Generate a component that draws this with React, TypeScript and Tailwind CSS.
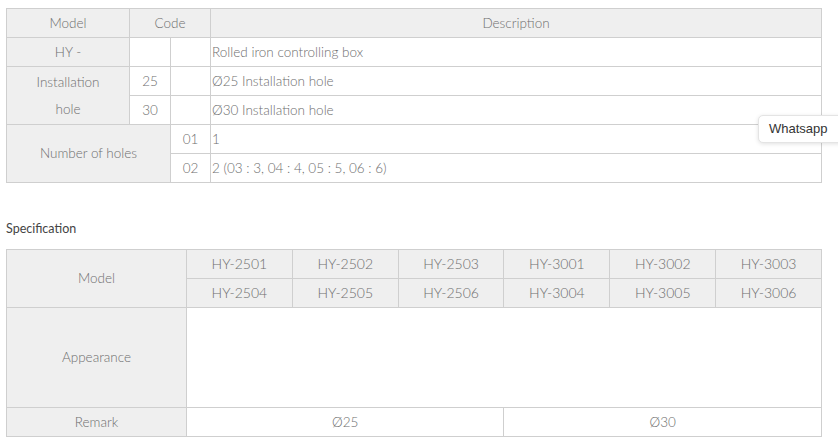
const cell = "border border-[#cfcfcf] text-center align-middle p-0";
const grey = "bg-[#efefef]";

const models = [
  ["HY-2501", "HY-2502", "HY-2503", "HY-3001", "HY-3002", "HY-3003"],
  ["HY-2504", "HY-2505", "HY-2506", "HY-3004", "HY-3005", "HY-3006"],
];

export default function App() {
  return (
    <div className="relative w-[838px] h-[444px] bg-white overflow-hidden font-['Lato',sans-serif] font-light text-[13.5px] text-[#6e6e6e]">
      <div className="pl-[6px] pt-[8px] w-[822px]">
        {/* Code table */}
        <table className="w-[816px] border-collapse table-fixed">
          <colgroup>
            <col className="w-[123px]" />
            <col className="w-[41px]" />
            <col className="w-[40px]" />
            <col />
          </colgroup>
          <tbody>
            <tr className="h-[29px]">
              <td className={`${cell} ${grey}`}>Model</td>
              <td className={`${cell} ${grey}`} colSpan={2}>Code</td>
              <td className={`${cell} ${grey}`}>Description</td>
            </tr>
            <tr className="h-[29px]">
              <td className={`${cell} ${grey}`}>HY -</td>
              <td className={cell}></td>
              <td className={cell}></td>
              <td className={`${cell} text-left pl-[1px]`}>Rolled iron controlling box</td>
            </tr>
            <tr className="h-[29px]">
              <td className={`${cell} ${grey} leading-[27px]`} rowSpan={2}>
                Installation
                <br />
                hole
              </td>
              <td className={cell}>25</td>
              <td className={cell}></td>
              <td className={`${cell} text-left pl-[1px]`}>Ø25 Installation hole</td>
            </tr>
            <tr className="h-[29px]">
              <td className={cell}>30</td>
              <td className={cell}></td>
              <td className={`${cell} text-left pl-[1px]`}>Ø30 Installation hole</td>
            </tr>
            <tr className="h-[29px]">
              <td className={`${cell} ${grey}`} rowSpan={2} colSpan={2}>Number of holes</td>
              <td className={cell}>01</td>
              <td className={`${cell} text-left pl-[1px]`}>1</td>
            </tr>
            <tr className="h-[29px]">
              <td className={cell}>02</td>
              <td className={`${cell} text-left pl-[1px]`}>2 (03 : 3, 04 : 4, 05 : 5, 06 : 6)</td>
            </tr>
          </tbody>
        </table>

        <p className="mt-[37px] text-[12.5px] font-normal text-[#444]">Specification</p>

        {/* Specification table */}
        <table className="mt-[10px] w-[816px] border-collapse table-fixed">
          <colgroup>
            <col className="w-[180px]" />
            <col /><col /><col /><col /><col /><col />
          </colgroup>
          <tbody>
            {models.map((row, i) => (
              <tr key={i} className="h-[29px]">
                {i === 0 && (
                  <td className={`${cell} ${grey}`} rowSpan={2}>Model</td>
                )}
                {row.map((m) => (
                  <td key={m} className={`${cell} ${grey} text-[14px]`}>{m}</td>
                ))}
              </tr>
            ))}
            <tr className="h-[100px]">
              <td className={`${cell} ${grey}`}>Appearance</td>
              <td className={cell} colSpan={6}></td>
            </tr>
            <tr className="h-[29px]">
              <td className={`${cell} ${grey}`}>Remark</td>
              <td className={cell} colSpan={3}>Ø25</td>
              <td className={cell} colSpan={3}>Ø30</td>
            </tr>
          </tbody>
        </table>
      </div>

      {/* Floating WhatsApp tab */}
      <div className="absolute left-[758px] top-[115px] h-[28px] w-[100px] rounded-[5px] bg-white border border-[#e4e4e4] shadow-[0_1px_4px_rgba(0,0,0,0.12)] pl-[10px] flex items-center font-['Liberation_Sans',sans-serif] font-normal text-[13px] text-[#333]">
        Whatsapp
      </div>
    </div>
  );
}
